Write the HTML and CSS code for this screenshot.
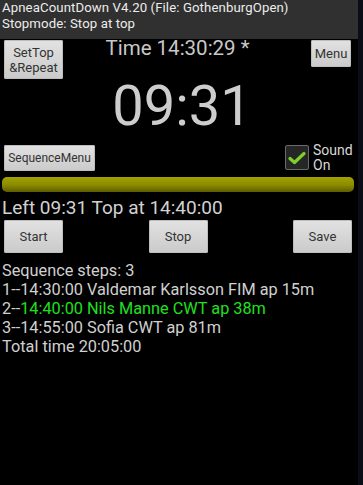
FILE: index.html
```html
<!DOCTYPE html>
<html lang="en">
<head>
  <meta charset="UTF-8">
  <meta name="viewport" content="width=device-width, initial-scale=1.0">
  <title>ApneaCountDown</title>
  <link rel="stylesheet" href="styles.css">
</head>
<body>
  <div class="screen">
    <div class="titlebar">
      <div>ApneaCountDown V4.20 (File: GothenburgOpen)</div>
      <div>Stopmode: Stop at top</div>
    </div>

    <div class="top-row">
      <button class="btn btn-settop">SetTop<br>&amp;Repeat</button>
      <div class="time">Time 14:30:29 *</div>
      <button class="btn btn-menu">Menu</button>
    </div>

    <div class="clock">09:31</div>

    <div class="seq-row">
      <button class="btn btn-seq">SequenceMenu</button>
      <label class="sound">
        <span class="checkbox">
          <svg width="18" height="14" viewBox="0 0 18 14">
            <path d="M2 7.5 L6.5 11.5 L16 2.5" fill="none" stroke="#7ccf2c" stroke-width="3.2" stroke-linecap="round" stroke-linejoin="round"/>
          </svg>
        </span>
        <span class="sound-text">Sound<br>On</span>
      </label>
    </div>

    <div class="progress"></div>

    <div class="left">Left 09:31 Top at 14:40:00</div>

    <div class="action-row">
      <button class="btn btn-action">Start</button>
      <button class="btn btn-action">Stop</button>
      <button class="btn btn-action">Save</button>
    </div>

    <div class="steps">
      <div>Sequence steps: 3</div>
      <div>1--14:30:00 Valdemar Karlsson FIM ap 15m</div>
      <div>2--<span class="current">14:40:00 Nils Manne CWT ap 38m</span></div>
      <div>3--14:55:00 Sofia CWT ap 81m</div>
      <div>Total time 20:05:00</div>
    </div>
  </div>
</body>
</html>
```

FILE: styles.css
```css
* {
  box-sizing: border-box;
}

body {
  margin: 0;
  background: #0a0d15;
  font-family: Roboto, "Noto Sans", sans-serif;
}

.screen {
  width: 358px;
  height: 485px;
  background: #000;
  color: #cfcfcf;
}

.titlebar {
  height: 39px;
  background: #303030;
  color: #ececec;
  font-size: 13.2px;
  letter-spacing: 0.1px;
  line-height: 15.6px;
  padding: 0 2px;
}

.btn {
  font-family: Roboto, "Noto Sans", sans-serif;
  color: #333;
  font-size: 12px;
  line-height: 14px;
  background: linear-gradient(#e2e2e2, #cacaca);
  border: none;
  border-radius: 2px;
  padding: 0;
  box-shadow: inset 0 0 0 1px #bdbdbd;
}

.top-row {
  display: grid;
  grid-template-columns: 1fr auto 1fr;
  align-items: start;
  padding: 1px 7px 0 4px;
  height: 40px;
}

.btn-settop {
  width: 59px;
  height: 39px;
  font-size: 13px;
  line-height: 15px;
}

.btn-menu {
  justify-self: end;
  width: 40px;
  height: 27px;
  font-size: 13px;
}

.time {
  font-size: 20.5px;
  line-height: 20px;
  margin-top: -2px;
  color: #c8c8c8;
}

.clock {
  font-size: 56px;
  line-height: 58px;
  text-align: center;
  color: #cdcdcd;
  margin-top: -2px;
  padding-left: 6px;
}

.seq-row {
  display: flex;
  justify-content: space-between;
  align-items: center;
  padding: 0 7px 0 4px;
  margin-top: 9px;
  height: 27px;
}

.btn-seq {
  width: 91px;
  height: 26px;
  font-size: 12px;
}

.sound {
  display: flex;
  align-items: center;
  gap: 4px;
}

.checkbox {
  width: 24px;
  height: 25px;
  border: 1px solid #6a6a6a;
  background: #262626;
  border-radius: 2px;
  display: flex;
  align-items: center;
  justify-content: center;
}

.sound-text {
  font-size: 14px;
  line-height: 15px;
  color: #d8d8d8;
  width: 38px;
}

.progress {
  margin: 6px 4px 0 2px;
  height: 15px;
  border-radius: 5px;
  background: linear-gradient(#a3a300, #8a8a00 55%, #5e5e00);
}

.left {
  font-size: 19px;
  line-height: 22px;
  padding-left: 2px;
  margin-top: 5px;
  color: #d2d2d2;
}

.action-row {
  display: flex;
  justify-content: space-between;
  padding: 0 6px 0 4px;
  margin-top: 1px;
}

.btn-action {
  width: 59px;
  height: 33px;
  font-size: 13px;
}

.steps {
  font-size: 16.3px;
  line-height: 19px;
  padding-left: 2px;
  margin-top: 8px;
  color: #d0d0d0;
}

.current {
  color: #1fe01f;
}
```
